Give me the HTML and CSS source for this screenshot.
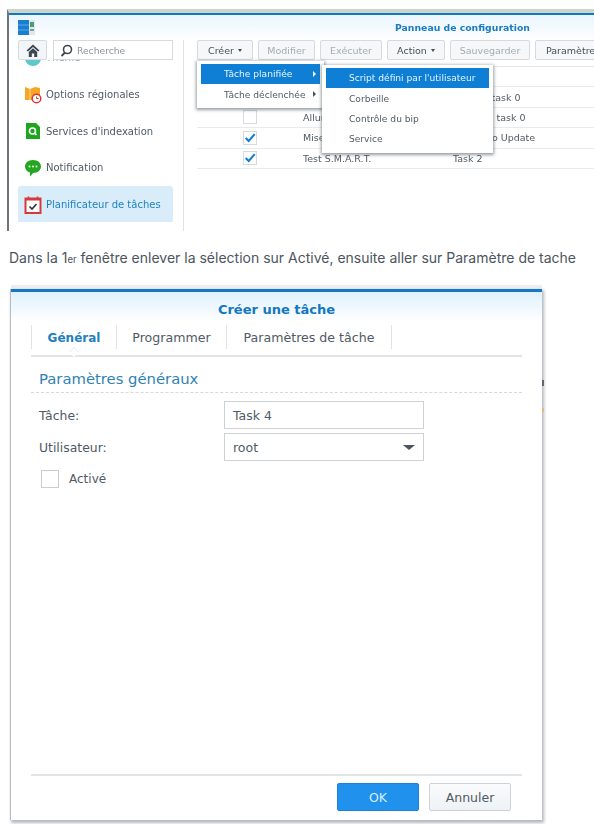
FILE: index.html
```html
<!DOCTYPE html>
<html lang="fr">
<head>
<meta charset="utf-8">
<title>Planificateur de tâches</title>
<link rel="stylesheet" href="styles.css">
</head>
<body>
<section class="shot">
  <div class="shot-title">
    <svg class="logo" width="18" height="15" viewBox="0 0 18 15"><rect width="11" height="15" fill="#1b7fd0"/><path d="M0 5h11M0 10h11" stroke="#5aa9e6" stroke-width="1"/><rect x="11" width="6" height="15" fill="#dfe8e4"/><rect x="12" y="2" width="4" height="5" fill="#4e9a7a"/><rect x="12" y="9" width="4" height="2" fill="#7d9aa8"/></svg>
    <span class="shot-heading">Panneau de configuration</span>
  </div>
  <div class="shot-body">
    <aside class="side">
      <div class="side-top">
        <span class="home"><svg width="14" height="13" viewBox="0 0 14 13"><path d="M7 0.5 0.5 6.500 2 7.500 7 3l5 4.500 1.500-1z" fill="#3d4650"/><path d="M2.800 8 7 4.300 11.200 8v5H8.200V9.500H5.800V13H2.800z" fill="#3d4650"/></svg></span>
        <span class="search"><svg width="13" height="13" viewBox="0 0 13 13"><circle cx="7.500" cy="5.500" r="4" fill="none" stroke="#3d4650" stroke-width="1.600"/><path d="M5 8.500 1.500 12" stroke="#3d4650" stroke-width="1.800"/></svg>Recherche</span>
      </div>
      <div class="nav">
        <div class="nav-item nav-hidden"><svg width="18" height="18" viewBox="0 0 18 18"><circle cx="9" cy="9" r="8" fill="#5fc8c8"/></svg>Thème</div>
        <div class="nav-item"><svg width="18" height="18" viewBox="0 0 18 18"><path d="M1 1l5 2 5-2 5 1v12H1z" fill="#f5a623"/><path d="M6 3v11" stroke="#fbd48a"/><circle cx="12.500" cy="12.500" r="4.300" fill="#fff" stroke="#d8383a" stroke-width="1.500"/><path d="M12.500 10.500v2h2" fill="none" stroke="#d8383a"/></svg>Options régionales</div>
        <div class="nav-item"><svg width="18" height="18" viewBox="0 0 18 18"><path d="M2 1h10l4 4v12H2z" fill="#1ea51e"/><circle cx="8.500" cy="9" r="3" fill="none" stroke="#fff" stroke-width="1.600"/><path d="M10.500 11l2 2" stroke="#fff" stroke-width="1.600"/></svg>Services d'indexation</div>
        <div class="nav-item"><svg width="18" height="18" viewBox="0 0 18 18"><path d="M9 1c4.500 0 8 2.800 8 6.500S13.500 14 9 14l-3 3.500V13.600C3 12.800 1 10.400 1 7.500 1 3.800 4.500 1 9 1z" fill="#23a71f"/><circle cx="5.500" cy="7.500" r="1" fill="#fff"/><circle cx="9" cy="7.500" r="1" fill="#fff"/><circle cx="12.500" cy="7.500" r="1" fill="#fff"/></svg>Notification</div>
        <div class="nav-item nav-active"><svg width="18" height="18" viewBox="0 0 18 18"><rect x="1.500" y="2.500" width="15" height="14.500" fill="#fff" stroke="#d8383a" stroke-width="2"/><rect x="1" y="2" width="16" height="2.500" fill="#d8383a"/><path d="M4.500 0.500v3M13.500 0.500v3" stroke="#d8383a" stroke-width="1.500"/><path d="M5.500 10.500l2.500 2.500 4.500-5" fill="none" stroke="#333" stroke-width="1.700"/></svg>Planificateur de tâches</div>
      </div>
    </aside>
    <div class="main">
      <div class="toolbar">
        <span class="tbtn tbtn-creer">Créer <i class="caret"></i></span>
        <span class="tbtn tbtn-off tbtn-modifier">Modifier</span>
        <span class="tbtn tbtn-off tbtn-exec">Exécuter</span>
        <span class="tbtn tbtn-action">Action <i class="caret"></i></span>
        <span class="tbtn tbtn-off tbtn-save">Sauvegarder</span>
        <span class="tbtn tbtn-param">Paramètres</span>
      </div>
      <div class="table">
        <div class="row"><span class="cell-check"></span><span class="cell-name"></span><span class="cell-task"></span></div>
        <div class="row"><span class="cell-check"></span><span class="cell-name"></span><span class="cell-task">Turn off task 0</span></div>
        <div class="row"><span class="cell-check"><i class="box"></i></span><span class="cell-name">Allumer</span><span class="cell-task">Wake on task 0</span></div>
        <div class="row"><span class="cell-check"><i class="box"><svg width="14" height="12" viewBox="0 0 14 12"><path d="M2 6l3.500 3.500L12.500 1.500" fill="none" stroke="#0f7fd6" stroke-width="2.400"/></svg></i></span><span class="cell-name">Mise à jour</span><span class="cell-task">NAS Auto Update</span></div>
        <div class="row"><span class="cell-check"><i class="box"><svg width="14" height="12" viewBox="0 0 14 12"><path d="M2 6l3.500 3.500L12.500 1.500" fill="none" stroke="#0f7fd6" stroke-width="2.400"/></svg></i></span><span class="cell-name">Test S.M.A.R.T.</span><span class="cell-task">Task 2</span></div>
      </div>
    </div>
  </div>
  <div class="menu menu-one">
    <div class="mitem mitem-on">Tâche planifiée<i class="arrow arrow-on"></i></div>
    <div class="mitem">Tâche déclenchée<i class="arrow"></i></div>
  </div>
  <div class="menu menu-two">
    <div class="mitem mitem-on">Script défini par l'utilisateur</div>
    <div class="mitem">Corbeille</div>
    <div class="mitem">Contrôle du bip</div>
    <div class="mitem">Service</div>
  </div>
</section>

<p class="intro">Dans la 1<small>er</small> fenêtre enlever la sélection sur Activé, ensuite aller sur Paramètre de tache</p>

<section class="dialog">
  <i class="mark mark-dark"></i>
  <i class="mark mark-orange"></i>
  <h1 class="dialog-title">Créer une tâche</h1>
  <div class="tabs">
    <span class="tab tab-on">Général</span>
    <span class="tab">Programmer</span>
    <span class="tab tab-last">Paramètres de tâche</span>
  </div>
  <div class="dialog-body">
    <h2 class="section">Paramètres généraux</h2>
    <div class="field"><label class="field-label">Tâche:</label><span class="input">Task 4</span></div>
    <div class="field"><label class="field-label">Utilisateur:</label><span class="input input-select">root<i class="select-caret"></i></span></div>
    <div class="check"><i class="check-box"></i>Activé</div>
  </div>
  <div class="footer">
    <span class="btn btn-ok">OK</span>
    <span class="btn">Annuler</span>
  </div>
</section>
</body>
</html>
```

FILE: styles.css
```css
* { box-sizing: border-box; }
html, body { margin: 0; padding: 0; background: #fff; }
body { width: 594px; height: 824px; overflow: hidden; font-family: "DejaVu Sans", sans-serif; color: #505a64; }
i { font-style: normal; display: inline-block; }

.shot { position: relative; width: 587px; height: 222px; margin: 9px 0 0 7px; border-left: 2px solid #6f7478; border-top: 4px solid #ccd5c8; background: linear-gradient(#e9f5fd, #fff 30px); box-shadow: inset 0 2px 0 #1277c4; filter: blur(.35px); overflow: hidden; font-size: 9.500px; }
.shot-title { display: flex; align-items: flex-start; height: 27px; padding: 7px 0 0 9px; }
.logo { flex: none; }
.shot-heading { margin: 2px 0 0 359px; font-weight: 700; font-size: 9.300px; color: #1a7cc4; white-space: nowrap; }
.shot-body { display: flex; }

.side { width: 175px; padding-left: 9px; border-right: 1px solid #dfe3e6; height: 191px; flex: none; }
.side-top { display: flex; gap: 6px; height: 20px; position: relative; z-index: 1; }
.home { display: flex; align-items: center; justify-content: center; width: 29px; height: 20px; border: 1px solid #d5dade; border-radius: 2px; background: #f3f6f8; }
.search { display: flex; align-items: center; gap: 4px; width: 120px; height: 20px; padding-left: 6px; border: 1px solid #d5dade; background: #fff; color: #8d959c; font-size: 9.200px; }
.nav { width: 155px; height: 162px; overflow: hidden; }
.nav-item { display: flex; align-items: center; gap: 4px; height: 36.700px; padding-left: 6px; border-radius: 3px; white-space: nowrap; font-size: 10px; }
.nav-hidden { margin-top: -20.500px; color: #9aa2a8; }
.nav-active { background: #d8edf9; color: #1f82c4; }

.main { flex: 1; min-width: 0; padding-left: 13px; }
.toolbar { display: flex; gap: 5px; height: 20px; }
.tbtn { display: flex; align-items: center; justify-content: center; gap: 4px; height: 20px; border: 1px solid #d5dade; border-radius: 2px; background: #f5f7f9; white-space: nowrap; flex: none; color: #46505a; }
.tbtn-off { color: #a4abb2; }
.tbtn-creer { width: 56px; }
.tbtn-modifier { width: 57px; }
.tbtn-exec { width: 62px; }
.tbtn-action { width: 58px; }
.tbtn-save { width: 80px; }
.tbtn-param { width: 72px; justify-content: flex-start; padding-left: 10px; }
.caret { width: 0; height: 0; border: 2.500px solid transparent; border-top: 3px solid #46505a; border-bottom: 0; }

.table { margin-top: 6px; border-top: 1px solid #e4e8eb; width: 397px; }
.row { display: flex; align-items: center; height: 20.400px; border-bottom: 1px solid #e8ebee; }
.cell-check { display: flex; justify-content: center; width: 106px; flex: none; }
.cell-name { width: 150px; flex: none; }
.box { display: flex; align-items: center; justify-content: center; width: 14px; height: 14px; border: 1px solid #d5dade; background: #fff; }

.menu { position: absolute; background: #fff; box-shadow: 0 1px 3px 1px rgba(70, 80, 90, .55); padding: 3px 4px; color: #505a64; z-index: 2; font-size: 9.100px; }
.menu-one { left: 188px; top: 48px; width: 127px; height: 47px; }
.menu-two { left: 313px; top: 52px; width: 171px; height: 88px; }
.mitem { position: relative; display: flex; align-items: center; height: 20.400px; white-space: nowrap; }
.menu-one .mitem { padding-left: 23px; }
.menu-two .mitem { padding-left: 23px; }
.mitem-on { background: #0f7fd6; color: #e8f4fd; }
.arrow { position: absolute; right: 4px; top: 7px; width: 0; height: 0; border: 3px solid transparent; border-left: 3px solid #46505a; border-right: 0; }
.arrow-on { border-left-color: #fff; }

.intro { margin: 17px 0 0 9px; height: 20px; font-family: Inter, sans-serif; font-size: 14px; line-height: 20px; color: #4c5560; white-space: nowrap; }
.intro small { font-size: 9.500px; }

.dialog { position: relative; width: 531px; height: 531px; margin: 21px 0 0 11px; border-top: 3px solid #1277c4; background: linear-gradient(#dff1fc, #fff 30px); box-shadow: -1px 0 0 #b8bcc0, 1px 2px 3px 1px #b4b8bc, 0 -4px 0 #eeeeee; font-size: 12px; display: flex; flex-direction: column; padding: 0 20px; }
.mark { position: absolute; left: 531px; width: 2px; }
.mark-dark { top: 88px; height: 6px; background: #666; }
.mark-orange { top: 116px; height: 4px; background: #e8b58a; }
.dialog-title { margin: 0; height: 33px; padding-top: 10px; text-align: center; font-size: 13px; font-weight: 700; line-height: 16px; color: #1278c3; }
.tabs { display: flex; height: 32px; padding-bottom: 6px; border-bottom: 2px solid #e2e5e8; }
.tab { display: flex; align-items: center; justify-content: center; width: 110px; padding-top: 1px; border-right: 1px solid #e0e4e7; color: #505a64; white-space: nowrap; font-size: 12.600px; }
.tab-on { position: relative; width: 86px; border-left: 1px solid #e0e4e7; font-size: 12px; font-weight: 700; color: #1f7fc0; }
.tab-on::after { content: ""; position: absolute; left: 37px; bottom: -8px; width: 9px; height: 9px; background: #fff; border-top: 1px solid #e2e5e8; border-left: 1px solid #e2e5e8; transform: rotate(45deg) scale(.7); }
.tab-last { width: 165px; }
.dialog-body { flex: 1; padding: 12px 0 0 8px; }
.section { margin: 0 0 0 -8px; height: 24px; border-bottom: 1px dashed #d5d9dc; padding-left: 8px; font-size: 14.800px; font-weight: 400; line-height: 20px; color: #2f82b4; }
.field { display: flex; align-items: center; height: 28px; margin-bottom: 4px; }
.section + .field { margin-top: 8px; }
.field-label { width: 185px; flex: none; color: #505a64; font-size: 12.400px; }
.input { position: relative; display: flex; align-items: center; width: 200px; height: 28px; padding-left: 8px; border: 1px solid #cdd2d6; font-size: 12.500px; background: #fff; }
.select-caret { position: absolute; right: 8px; top: 11px; width: 0; height: 0; border: 6px solid transparent; border-top: 5px solid #4c5560; border-bottom: 0; }
.check { display: flex; align-items: center; gap: 10px; margin: 9px 0 0 2px; }
.check-box { width: 18px; height: 18px; border: 1px solid #c8cdd1; background: #fff; }
.footer { display: flex; justify-content: flex-end; gap: 10px; height: 46px; padding: 7px 11px 0 0; border-top: 2px solid #e2e5e8; flex: none; }
.btn { display: flex; align-items: center; justify-content: center; width: 82px; height: 28px; border: 1px solid #ccd3d9; border-radius: 2px; background: linear-gradient(#fafbfc, #eef2f6); font-size: 12.500px; color: #505a64; }
.btn-ok { background: #2191ee; border-color: #1b82d8; color: #d8efff; }
```
